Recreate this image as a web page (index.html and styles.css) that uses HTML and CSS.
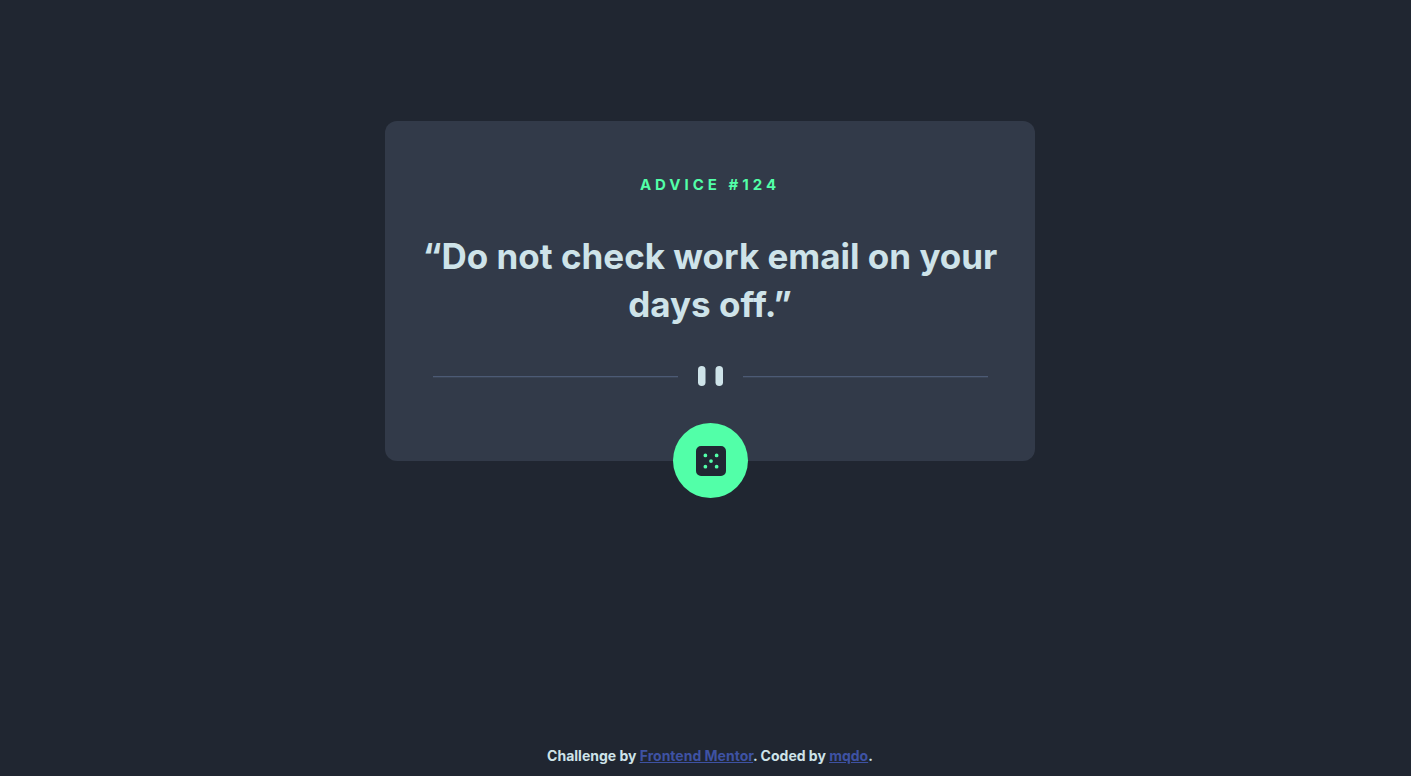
FILE: index.html
```html
<!DOCTYPE html>
<html lang="en">
<head>
<meta charset="utf-8">
<meta name="viewport" content="width=device-width, initial-scale=1">
<title>Advice generator</title>
<link rel="stylesheet" href="styles.css">
</head>
<body>
<main class="main">
  <article class="card">
    <h1 class="card-label">ADVICE #124</h1>
    <p class="card-quote">“Do not check work email on your days off.”</p>
    <div class="divider">
      <svg class="divider-icon" width="25" height="20" viewBox="0 0 25 20" aria-hidden="true"><rect width="7.5" height="20" rx="3.75"/><rect x="17.5" width="7.5" height="20" rx="3.75"/></svg>
    </div>
    <button class="dice" type="button" aria-label="New advice">
      <svg width="31" height="30" viewBox="-0.8 0 24.8 24" aria-hidden="true"><path fill="#202733" fill-rule="evenodd" d="M20 0H4a4.005 4.005 0 0 0-4 4v16a4.005 4.005 0 0 0 4 4h16a4.005 4.005 0 0 0 4-4V4a4.005 4.005 0 0 0-4-4ZM7.500 18a1.500 1.500 0 1 1 0-3 1.500 1.500 0 0 1 0 3Zm0-9a1.500 1.500 0 1 1 0-3 1.500 1.500 0 0 1 0 3Zm4.500 4.500a1.500 1.500 0 1 1 0-3 1.500 1.500 0 0 1 0 3Zm4.500 4.500a1.500 1.500 0 1 1 0-3 1.500 1.500 0 0 1 0 3Zm0-9a1.500 1.500 0 1 1 0-3 1.500 1.500 0 0 1 0 3Z"/></svg>
    </button>
  </article>
</main>
<footer class="footer">Challenge by <a href="#mentor">Frontend Mentor</a>. Coded by <a href="#author">mqdo</a>.</footer>
</body>
</html>
```
FILE: styles.css
```css
* { box-sizing: border-box; }
body {
  margin: 0;
  min-height: 100vh;
  display: flex;
  flex-direction: column;
  background: #202631;
  color: #cee3e9;
  font-family: Inter, "Open Sans", sans-serif;
  font-weight: 700;
}
.main {
  flex: 1;
  display: flex;
  justify-content: center;
  align-items: flex-start;
  padding: 121px 16px 48px 25px;
}
.card {
  width: 100%;
  max-width: 650px;
  padding: 54px 36px 0;
  border-radius: 12px;
  background: #323a49;
  display: flex;
  flex-direction: column;
  align-items: center;
}
.card-label {
  margin: 0;
  font-size: 15px;
  line-height: 20px;
  letter-spacing: 4px;
  color: #52ffa8;
}
.card-quote {
  margin: 37px 0 0;
  font-size: 35px;
  line-height: 48px;
  text-align: center;
}
.divider {
  align-self: stretch;
  display: flex;
  align-items: center;
  gap: 20px;
  margin-top: 38px;
  padding: 0 11px 0 12px;
}
.divider::before,
.divider::after {
  content: "";
  flex: 1;
  height: 1px;
  background: #4c5a75;
  box-shadow: 0 1px #3a4455;
}
.divider-icon { fill: #cee3e9; }
.dice {
  width: 75px;
  height: 75px;
  margin: 37px 0 -37px;
  padding: 0;
  border: 0;
  border-radius: 50%;
  background: #52ffa8;
  display: grid;
  place-items: center;
  cursor: pointer;
}
.footer {
  padding: 0 16px 10px 25px;
  font-size: 14px;
  line-height: 20px;
  text-align: center;
}
.footer a { color: #3e52a3; }
```
